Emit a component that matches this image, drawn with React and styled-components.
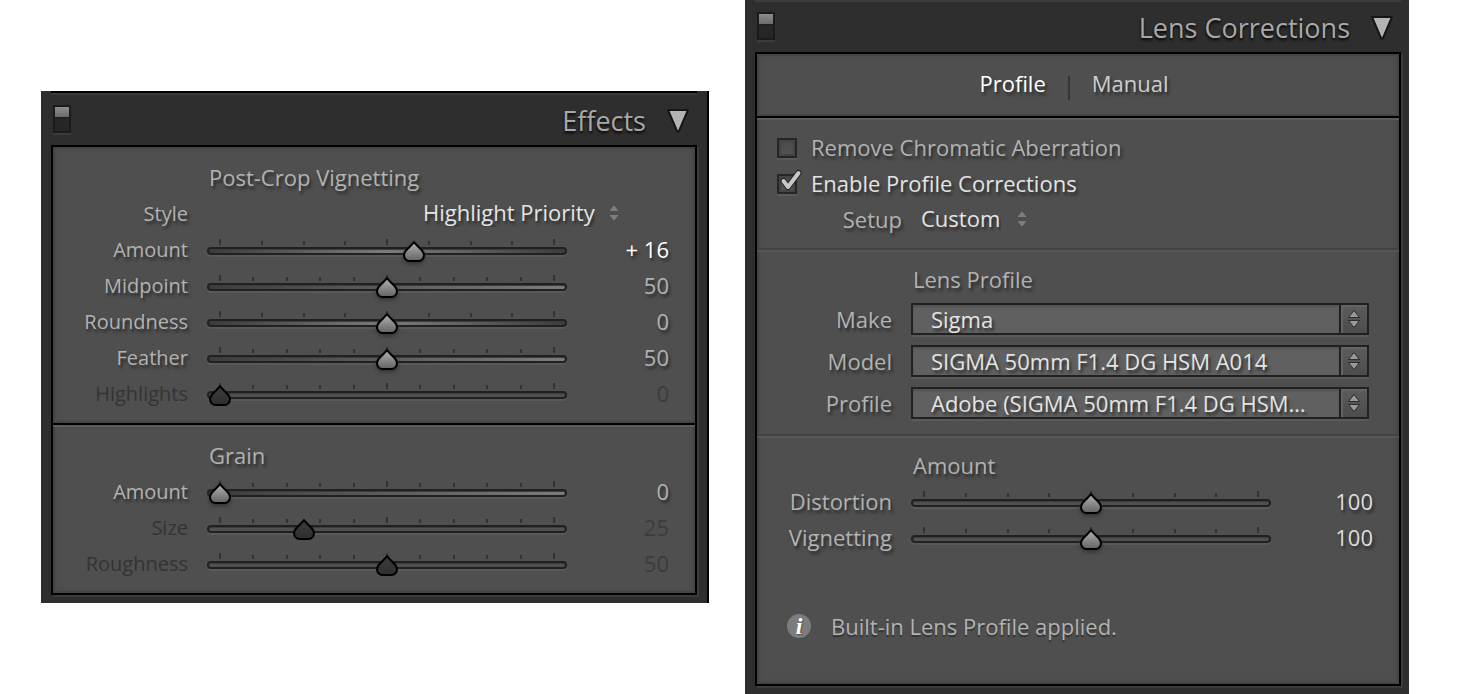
import React, { useId, useState } from "react";
import styled, { createGlobalStyle } from "styled-components";

const TRACKS = {
  peak: "linear-gradient(90deg, #3c3c3c, #7c7c7c 50%, #3c3c3c)",
  rise: "linear-gradient(90deg, #3c3c3c, #7c7c7c)",
  flat: "#505050",
};

const Arrows = ({ outlined }) => (
  <svg width="14" height="20" viewBox="0 0 14 20" aria-hidden="true">
    <path
      d="M7 1.5 L12.5 8.5 H1.5 Z M1.5 11.5 H12.5 L7 18.5 Z"
      fill={outlined ? "#999" : "#7c7c7c"}
      stroke={outlined ? "#2c2c2c" : "#4c4c4c"}
      strokeLinejoin="round"
    />
  </svg>
);

const Slider = ({
  label,
  start,
  min = 0,
  max = 100,
  steps = 10,
  track = "flat",
  signed,
  strong,
  small,
  disabled,
}) => {
  const id = useId();
  const [value, setValue] = useState(start);
  const percent = ((value - min) / (max - min)) * 100;
  const ticks = Array.from({ length: steps + 1 }, (_, i) => i);

  return (
    <Row>
      <Label htmlFor={id} $small={small} $disabled={disabled}>
        {label}
      </Label>
      <Rail>
        <Ticks>
          {ticks.map((i) => (
            <Tick key={i} $big={i % (steps / 2) === 0} />
          ))}
        </Ticks>
        <Range
          id={id}
          type="range"
          min={min}
          max={max}
          value={value}
          disabled={disabled}
          $track={track}
          onChange={(e) => setValue(Number(e.target.value))}
        />
        <ThumbArea>
          <Thumb
            viewBox="0 0 24 24"
            style={{ left: `${percent}%` }}
            $disabled={disabled}
            aria-hidden="true"
          >
            <defs>
              <linearGradient id={`${id}fill`} x1="0" y1="0" x2="0" y2="1">
                <stop offset="0" stopColor={disabled ? "#3c3c3c" : "#b4b4b4"} />
                <stop offset="1" stopColor={disabled ? "#2e2e2e" : "#626262"} />
              </linearGradient>
            </defs>
            <path
              d="M12 3 C13.5 5.5 17.5 8.5 20 11.5 C21.4 13.2 22 14.2 22 16 C22 19.5 19.5 22 16.5 22 H7.5 C4.5 22 2 19.5 2 16 C2 14.2 2.6 13.2 4 11.5 C6.5 8.5 10.5 5.5 12 3 Z"
              fill={`url(#${id}fill)`}
              stroke="#000"
              strokeWidth="2"
              strokeLinejoin="round"
            />
          </Thumb>
        </ThumbArea>
      </Rail>
      <Value htmlFor={id} $strong={strong} $bright={signed} $disabled={disabled}>
        {signed && value > 0 ? `+ ${value}` : value}
      </Value>
    </Row>
  );
};

const ProfileSelect = ({ label, value }) => {
  const id = useId();
  return (
    <SelectRow>
      <Label htmlFor={id}>{label}</Label>
      <SelectBox>
        <BoxedSelect id={id}>
          <option>{value}</option>
        </BoxedSelect>
        <Stepper>
          <Arrows outlined />
        </Stepper>
      </SelectBox>
    </SelectRow>
  );
};

const Check = ({ label, start }) => {
  const [checked, setChecked] = useState(start);
  return (
    <CheckRow $checked={checked}>
      <CheckCell>
        <Checkbox
          type="checkbox"
          checked={checked}
          onChange={(e) => setChecked(e.target.checked)}
        />
        {checked && (
          <CheckMark viewBox="0 0 24 24" aria-hidden="true">
            <path d="M4.5 12 L9 18 L19.5 4" stroke="#222" strokeWidth="6" />
            <path d="M4.5 12 L9 18 L19.5 4" stroke="#c8c8c8" strokeWidth="4" />
          </CheckMark>
        )}
      </CheckCell>
      {label}
    </CheckRow>
  );
};

const PanelHeader = ({ title, topLine }) => (
  <Header $topLine={topLine}>
    <Switch type="button" aria-label={`Toggle ${title}`} />
    <Title>{title}</Title>
    <Collapse type="button" aria-label={`Collapse ${title}`}>
      <svg width="24" height="26" viewBox="0 0 24 26" aria-hidden="true">
        <path
          d="M2 2 H22 L12.8 23.5 H11.2 Z"
          fill="#b4b4b4"
          stroke="#161616"
          strokeWidth="2"
          strokeLinejoin="round"
        />
      </svg>
    </Collapse>
  </Header>
);

export default function App() {
  return (
    <>
      <GlobalStyle />
      <Page>
        <Panel $edge>
          <PanelHeader title="Effects" topLine />
          <Body>
            <Section $roomy>
              <SectionTitle>Post-Crop Vignetting</SectionTitle>
              <Row>
                <Label htmlFor="style" $small>
                  Style
                </Label>
                <StyleChoice>
                  <PlainSelect id="style">
                    <option>Highlight Priority</option>
                  </PlainSelect>
                  <Arrows />
                </StyleChoice>
              </Row>
              <Slider label="Amount" start={16} min={-100} steps={8} track="peak" signed small />
              <Slider label="Midpoint" start={50} track="rise" small />
              <Slider label="Roundness" start={0} min={-100} steps={8} track="peak" small />
              <Slider label="Feather" start={50} track="rise" small />
              <Slider label="Highlights" start={0} small disabled />
            </Section>
            <Section $roomy $line="strong">
              <SectionTitle>Grain</SectionTitle>
              <Slider label="Amount" start={0} track="rise" small />
              <Slider label="Size" start={25} small disabled />
              <Slider label="Roughness" start={50} small disabled />
            </Section>
          </Body>
        </Panel>

        <Panel>
          <PanelHeader title="Lens Corrections" />
          <Body>
            <Tabs>
              <Tab type="button" $active>
                Profile
              </Tab>
              <TabLine />
              <Tab type="button">Manual</Tab>
            </Tabs>
            <Section $line="strong">
              <Check label="Remove Chromatic Aberration" start={false} />
              <Check label="Enable Profile Corrections" start />
              <SetupRow>
                <Label htmlFor="setup">Setup</Label>
                <SetupChoice>
                  <PlainSelect id="setup">
                    <option>Custom</option>
                  </PlainSelect>
                  <Arrows />
                </SetupChoice>
              </SetupRow>
            </Section>
            <Section $line="soft">
              <SectionTitle>Lens Profile</SectionTitle>
              <ProfileSelect label="Make" value="Sigma" />
              <ProfileSelect label="Model" value="SIGMA 50mm F1.4 DG HSM A014" />
              <ProfileSelect label="Profile" value="Adobe (SIGMA 50mm F1.4 DG HSM…" />
            </Section>
            <Section $line="soft">
              <SectionTitle>Amount</SectionTitle>
              <Slider label="Distortion" start={100} max={200} steps={8} strong />
              <Slider label="Vignetting" start={100} max={200} steps={8} strong />
              <Info>
                <InfoIcon>i</InfoIcon>
                Built-in Lens Profile applied.
              </Info>
            </Section>
          </Body>
        </Panel>
      </Page>
    </>
  );
}

const GlobalStyle = createGlobalStyle`
  * {
    box-sizing: border-box;
  }

  body {
    margin: 0;
    background: #fff;
    color: #b2b2b2;
    font-family: "Open Sans", "Noto Sans", sans-serif;
    font-size: 22px;
    line-height: 34px;
  }

  button, select, input {
    margin: 0;
    font: inherit;
    color: inherit;
  }

  svg {
    display: block;
    flex: none;
  }
`;

const Page = styled.main`
  display: grid;
  grid-template-columns: minmax(0, 668fr) minmax(0, 664fr);
  align-items: center;
  gap: 36px;
  padding: 0 50px 0 41px;
`;

const Panel = styled.section`
  padding: 0 ${(p) => (p.$edge ? 10 : 8)}px 8px 10px;
  background: #2e2e2e;
  border-right: ${(p) => (p.$edge ? "2px solid #000" : "none")};
`;

const Header = styled.header`
  display: flex;
  align-items: center;
  height: ${(p) => (p.$topLine ? 54 : 52)}px;
  padding: 0 7px 0 2px;
  border-top: ${(p) => (p.$topLine ? "2px solid #000" : "none")};
  box-shadow: inset 0 2px #3b3b3b;
`;

const Switch = styled.button`
  width: 18px;
  height: 28px;
  padding: 0;
  border: 2px solid #1b1b1b;
  background: linear-gradient(#8c8c8c, #6c6c6c 10px, #1b1b1b 10px, #262626 12px);
  box-shadow: 0 2px #3b3b3b;
`;

const Title = styled.h2`
  flex: 1;
  margin: 0;
  padding-top: 4px;
  text-align: right;
  font-size: 27px;
  font-weight: 400;
  color: #a8a8a8;
  text-shadow: 0 2px 3px #000;
`;

const Collapse = styled.button`
  margin-left: 20px;
  padding: 4px 0 0;
  border: 0;
  background: none;
`;

const Body = styled.div`
  border: 2px solid #000;
  background: #4f4f4f;
  box-shadow: 2px 2px #3b3b3b, inset 0 0 0 2px #444, inset 0 0 4px 2px #484848;
`;

const Section = styled.div`
  padding: ${(p) => (p.$roomy ? "13px 0 11px" : "12px 0 10px")};
  ${(p) => p.$line === "strong" && "border-top: 2px solid #000; box-shadow: 0 -2px #444, inset 0 2px #5c5c5c;"}
  ${(p) => p.$line === "soft" && "border-top: 2px solid #434343; box-shadow: inset 0 2px #565656;"}
`;

const SectionTitle = styled.h3`
  height: 36px;
  margin: 0 0 0 156px;
  font-size: 22px;
  font-weight: 400;
  text-shadow: 2px 3px 3px #2a2a2a;
`;

const Row = styled.div`
  display: grid;
  grid-template-columns: 135px minmax(0, 1fr) 83px;
  column-gap: 19px;
  padding-right: 26px;
  height: 36px;
`;

const Label = styled.label`
  text-align: right;
  font-size: ${(p) => (p.$small ? 20 : 22)}px;
  line-height: ${(p) => (p.$small ? 36 : 34)}px;
  color: ${(p) => (p.$disabled ? "#343434" : "#b2b2b2")};
  text-shadow: ${(p) => (p.$disabled ? "none" : "2px 3px 3px #2a2a2a")};
`;

const Rail = styled.div`
  position: relative;
`;

const Ticks = styled.div`
  display: flex;
  justify-content: space-between;
  align-items: flex-end;
  height: 13px;
  padding: 0 12px;
`;

const Tick = styled.i`
  width: 2px;
  height: ${(p) => (p.$big ? 6 : 4)}px;
  background: #323232;
`;

const Range = styled.input`
  display: block;
  width: 100%;
  height: 8px;
  margin-top: 2px;
  appearance: none;
  border: 2px solid #212121;
  border-radius: 4px;
  background: ${(p) => TRACKS[p.$track]};
  box-shadow: 0 2px #595959, inset 0 1px #3c3c3c;

  &::-webkit-slider-thumb {
    appearance: none;
    width: 22px;
    height: 22px;
    background: transparent;
  }
`;

const ThumbArea = styled.div`
  position: absolute;
  inset: 7px 13px auto;
  pointer-events: none;
`;

const Thumb = styled.svg`
  position: absolute;
  width: 24px;
  height: 24px;
  transform: translateX(-50%);
  filter: ${(p) => (p.$disabled ? "none" : "drop-shadow(0 2px 2px #333)")};
`;

const Value = styled.output`
  text-align: right;
  color: ${(p) => (p.$disabled ? "#3c3c3c" : p.$bright ? "#fff" : p.$strong ? "#dedede" : "#b2b2b2")};
  text-shadow: ${(p) => (p.$disabled ? "none" : "2px 3px 3px #2a2a2a")};
`;

const PlainSelect = styled.select`
  height: 36px;
  padding: 0 0 4px;
  appearance: none;
  border: 0;
  background: none;
  color: #e4e4e4;
  text-shadow: 2px 3px 3px #2a2a2a;
`;

const StyleChoice = styled.div`
  grid-column: 2 / -1;
  display: flex;
  align-items: center;
  justify-content: flex-end;
  gap: 12px;
  height: 34px;
  padding-right: 48px;
`;

const Tabs = styled.nav`
  display: flex;
  align-items: center;
  justify-content: center;
  gap: 22px;
  height: 62px;
  padding-right: 8px;
`;

const Tab = styled.button`
  padding: 0 0 4px;
  border: 0;
  background: none;
  color: ${(p) => (p.$active ? "#fff" : "#cecece")};
  text-shadow: 2px 3px 3px #2a2a2a;
`;

const TabLine = styled.span`
  width: 2px;
  height: 24px;
  margin-top: 6px;
  background: #363636;
`;

const CheckRow = styled.label`
  display: flex;
  gap: 14px;
  height: 36px;
  padding-left: 20px;
  color: ${(p) => (p.$checked ? "#e4e4e4" : "#b2b2b2")};
  text-shadow: 2px 3px 3px #2a2a2a;
`;

const CheckCell = styled.span`
  position: relative;
  width: 20px;
  height: 20px;
  margin-top: 8px;
`;

const Checkbox = styled.input`
  display: block;
  width: 20px;
  height: 20px;
  appearance: none;
  border: 2px solid #262626;
  background: linear-gradient(#4a4a4a, #545454);
  box-shadow: 0 2px #5a5a5a, inset 0 0 0 2px #444;
`;

const CheckMark = styled.svg`
  position: absolute;
  top: -5px;
  left: 2px;
  width: 24px;
  height: 24px;
  fill: none;
  stroke-linecap: round;
  stroke-linejoin: round;
  pointer-events: none;
`;

const SetupRow = styled.div`
  display: grid;
  grid-template-columns: 145px 1fr;
  column-gap: 19px;
  height: 36px;
`;

const SetupChoice = styled.div`
  display: flex;
  align-items: center;
  gap: 14px;
  height: 34px;
`;

const SelectRow = styled.div`
  display: grid;
  grid-template-columns: 135px minmax(0, 1fr);
  column-gap: 19px;
  align-items: center;
  height: 42px;
  padding-right: 30px;
`;

const SelectBox = styled.div`
  display: flex;
  height: 32px;
  border: 2px solid #212121;
  background: #606060;
  box-shadow: 0 2px #5a5a5a;
`;

const BoxedSelect = styled.select`
  flex: 1;
  min-width: 0;
  padding: 0 0 0 18px;
  appearance: none;
  border: 0;
  background: none;
  box-shadow: inset 0 2px 2px #545454;
  color: #e4e4e4;
  line-height: 28px;
  text-shadow: 2px 3px 3px #2a2a2a;
`;

const Stepper = styled.span`
  display: grid;
  place-items: center;
  width: 28px;
  border-left: 2px solid #212121;
  background: linear-gradient(#5c5c5c, #4c4c4c);
  box-shadow: inset 2px 2px #646464;
`;

const Info = styled.p`
  display: flex;
  align-items: center;
  gap: 20px;
  height: 36px;
  margin: 52px 0 30px;
  padding-left: 30px;
  text-shadow: 0 2px 1px #333;
`;

const InfoIcon = styled.span`
  width: 24px;
  height: 24px;
  border-radius: 50%;
  background: #7c7c7c;
  color: #fff;
  font: italic 700 24px/24px "Liberation Serif", serif;
  text-align: center;
  text-shadow: 1px 1px 1px #555;
`;
